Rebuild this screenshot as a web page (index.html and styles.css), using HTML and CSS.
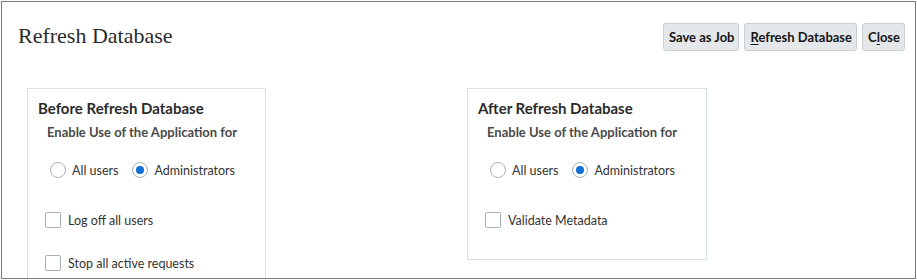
FILE: index.html
```html
<!DOCTYPE html>
<html>
<head>
<meta charset="utf-8">
<link rel="stylesheet" href="styles.css">
</head>
<body>
<div class="frame">
  <div class="header">
    <h1 class="title">Refresh Database</h1>
    <div class="actions">
      <button class="btn">Save as Job</button>
      <button class="btn"><u>R</u>efresh Database</button>
      <button class="btn">C<u>l</u>ose</button>
    </div>
  </div>
  <div class="panels">
    <section class="panel panel-before">
      <h2 class="panel-title">Before Refresh Database</h2>
      <div class="group-label">Enable Use of the Application for</div>
      <div class="radios">
        <label class="radio"><span class="radio-circle"></span>All users</label>
        <label class="radio"><span class="radio-circle checked"></span>Administrators</label>
      </div>
      <label class="check"><span class="check-box"></span>Log off all users</label>
      <label class="check"><span class="check-box"></span>Stop all active requests</label>
    </section>
    <section class="panel panel-after">
      <h2 class="panel-title">After Refresh Database</h2>
      <div class="group-label">Enable Use of the Application for</div>
      <div class="radios">
        <label class="radio"><span class="radio-circle"></span>All users</label>
        <label class="radio"><span class="radio-circle checked"></span>Administrators</label>
      </div>
      <label class="check"><span class="check-box"></span>Validate Metadata</label>
    </section>
  </div>
</div>
</body>
</html>
```
FILE: styles.css
```css
* { box-sizing: border-box; }
html, body { margin: 0; padding: 0; background: #fff; }
body {
  font-family: Lato, "Liberation Sans", Arial, sans-serif;
  color: #333;
}
.frame {
  margin: 1px;
  width: 915px;
  height: 278px;
  border: 1px solid #7a7a7a;
  overflow: hidden;
}
.header {
  display: flex;
  justify-content: space-between;
  align-items: flex-start;
  padding: 20px 10px 0 16px;
}
.title {
  margin: 1px 0 0 0;
  font-family: "Liberation Serif", "Times New Roman", serif;
  font-weight: normal;
  font-size: 22px;
  line-height: 26px;
  color: #2b2b2b;
}
.actions {
  display: flex;
  gap: 5px;
  padding-top: 1px;
}
.btn {
  height: 28px;
  padding: 0 4px 0 5px;
  font-family: Lato, "Liberation Sans", Arial, sans-serif;
  font-weight: bold;
  font-size: 13px;
  color: #161513;
  background: #e4e8ea;
  border: 1px solid #c9ced2;
  border-radius: 3px;
}
.btn u { text-underline-offset: 2px; }
.panels {
  display: flex;
  gap: 201px;
  padding: 37px 0 0 25px;
}
.panel {
  border: 1px solid #d8dfe5;
  padding: 9px 10px 0 10px;
}
.panel-before { width: 239px; height: 200px; }
.panel-after { width: 240px; height: 172px; }
.panel-title {
  margin: 0;
  font-size: 15px;
  line-height: 20px;
  font-weight: bold;
  color: #2b2b2b;
}
.group-label {
  margin: 6px 0 0 9px;
  font-size: 13px;
  line-height: 16px;
  font-weight: bold;
  color: #4a4a4a;
}
.radios {
  display: flex;
  gap: 14px;
  margin: 20px 0 0 12px;
  height: 20px;
  align-items: center;
}
.radio {
  display: flex;
  align-items: center;
  gap: 6px;
  font-size: 12.5px;
}
.radio-circle {
  width: 16px;
  height: 16px;
  border: 1px solid #a9b1b8;
  border-radius: 50%;
  display: flex;
  align-items: center;
  justify-content: center;
}
.radio-circle.checked::after {
  content: "";
  width: 8px;
  height: 8px;
  border-radius: 50%;
  background: #0f6fd6;
}
.check {
  display: flex;
  align-items: center;
  gap: 7px;
  margin: 32px 0 0 7px;
  height: 16px;
  font-size: 12.5px;
}
.check + .check { margin-top: 27px; }
.check-box {
  width: 16px;
  height: 16px;
  border: 1px solid #a9b1b8;
  border-radius: 2px;
}
```
